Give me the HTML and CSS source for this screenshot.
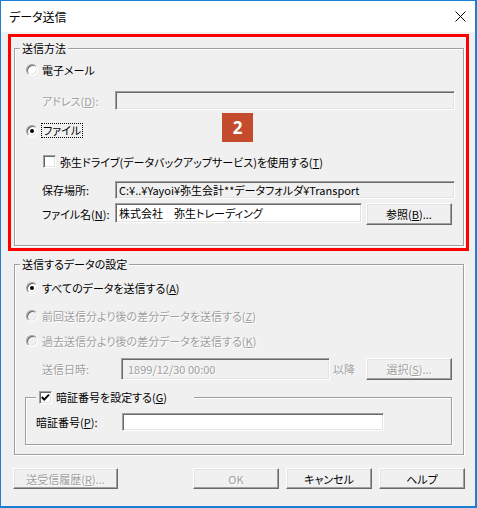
FILE: index.html
```html
<!DOCTYPE html>
<html lang="ja">
<head>
<meta charset="utf-8">
<title>データ送信</title>
<link rel="stylesheet" href="styles.css">
</head>
<body>
<div class="window">
  <div class="titlebar">
    <span class="title">データ送信</span>
    <svg class="close" width="11" height="11" viewBox="0 0 11 11"><path d="M0.5 0.5L10.5 10.5M10.5 0.5L0.5 10.5" stroke="#000" stroke-width="1" fill="none"/></svg>
  </div>
  <div class="client">
    <div class="highlight">
      <div class="group g1">
        <div class="legend">送信方法</div>
        <div class="row r-mail"><span class="radio"></span><span class="lbl">電子メール</span></div>
        <div class="row r-addr disabled"><span class="label l1">アドレス(<u>D</u>):</span><span class="field wide ro"></span></div>
        <div class="row r-file"><span class="radio on"></span><span class="lbl focus">ファイル</span></div>
        <div class="row r-drive"><span class="check"></span><span class="lbl">弥生ドライブ(データバックアップサービス)を使用する(<u>T</u>)</span></div>
        <div class="row r-path"><span class="label l1">保存場所:</span><span class="field wide ro">C:¥..¥Yayoi¥弥生会計**データフォルダ¥Transport</span></div>
        <div class="row r-name"><span class="label l1">ファイル名(<u>N</u>):</span><span class="field name">株式会社　弥生トレーディング</span><span class="button ref">参照(<u>B</u>)...</span></div>
      </div>
      <div class="badge">2</div>
    </div>

    <div class="group g2">
      <div class="legend">送信するデータの設定</div>
      <div class="row r-all"><span class="radio on"></span><span class="lbl">すべてのデータを送信する(<u>A</u>)</span></div>
      <div class="row r-prev disabled"><span class="radio dis"></span><span class="lbl">前回送信分より後の差分データを送信する(<u>Z</u>)</span></div>
      <div class="row r-past disabled"><span class="radio dis"></span><span class="lbl">過去送信分より後の差分データを送信する(<u>K</u>)</span></div>
      <div class="row r-date disabled"><span class="label l2">送信日時:</span><span class="field date ro">1899/12/30 00:00</span><span class="after">以降</span><span class="button sel">選択(<u>S</u>)...</span></div>
      <div class="group sub">
        <div class="legend pin-legend"><span class="check"><svg width="11" height="11" viewBox="0 0 11 11"><polyline points="1.8,5 4.2,7.6 9,2.6" fill="none" stroke="#000" stroke-width="1.9"/></svg></span><span class="lbl">暗証番号を設定する(<u>G</u>)</span></div>
        <div class="row r-pin"><span class="label l3">暗証番号(<u>P</u>):</span><span class="field pin"></span></div>
      </div>
    </div>

    <div class="buttons">
      <span class="button hist disabled">送受信履歴(<u>R</u>)...</span>
      <span class="button ok disabled">OK</span>
      <span class="button">キャンセル</span>
      <span class="button">ヘルプ</span>
    </div>
  </div>
</div>
</body>
</html>
```

FILE: styles.css
```css
* { box-sizing: border-box; }
html, body { margin: 0; padding: 0; }
body {
  width: 477px;
  height: 508px;
  background: #ffffff;
  font-family: "Noto Sans CJK JP", "Noto Sans", sans-serif;
  font-size: 11px;
  color: #000;
  font-feature-settings: "palt";
}
u { text-decoration: underline; text-underline-offset: 1px; }

.window {
  width: 477px;
  height: 508px;
  border-style: solid;
  border-color: #1c7fd6;
  border-width: 1px 2px 2px 1px;
  background: #f0f0f0;
  display: flex;
  flex-direction: column;
}
.titlebar {
  height: 31px;
  flex: none;
  background: #fff;
  display: flex;
  align-items: center;
  justify-content: space-between;
  padding: 0 9px 0 8px;
}
.title { font-size: 12px; line-height: 14px; }
.close { display: block; }

.client { display: flex; flex-direction: column; }

.highlight {
  position: relative;
  margin: 2px 0 0 7px;
  width: 461px;
  height: 217px;
  border: 3px solid #ff0000;
  padding: 11px 0 0 3px;
}
.badge {
  position: absolute;
  left: 211px;
  top: 76px;
  width: 31px;
  height: 29px;
  background: #c44b2b;
  color: #fff;
  font-family: "Noto Sans", sans-serif;
  font-weight: 700;
  font-size: 17px;
  line-height: 29px;
  text-align: center;
}

.group {
  border: 1px solid #a0a0a0;
  box-shadow: inset 1px 1px 0 #fff, 1px 1px 0 #fff;
  display: flex;
  flex-direction: column;
}
.g1 { width: 450px; height: 198px; }
.g2 { width: 450px; height: 191px; margin: 13px 0 0 13px; }
.sub { width: 427px; height: 48px; margin: 17px 0 0 10px; }

.legend {
  align-self: flex-start;
  margin: -8px 0 0 5px;
  padding: 0 2px;
  height: 14px;
  line-height: 14px;
  background: #f0f0f0;
  white-space: nowrap;
}
.pin-legend {
  margin-left: 10px;
  width: 158px;
  padding: 0 0 0 3px;
  display: flex;
  align-items: center;
  gap: 4px;
}

.row { display: flex; align-items: center; white-space: nowrap; line-height: 14px; }
.lbl { line-height: 14px; }

.r-mail { margin-top: 7px; height: 16px; padding-left: 11px; gap: 4px; }
.r-addr { margin-top: 13px; height: 19px; padding-left: 27px; }
.r-file { margin-top: 13px; height: 15px; padding-left: 11px; gap: 4px; }
.r-drive { margin-top: 16px; height: 15px; padding-left: 28px; gap: 4px; }
.r-path { margin-top: 12px; height: 18px; padding-left: 27px; }
.r-name { margin-top: 4px; height: 22px; padding-left: 27px; align-items: flex-start; }

.r-all { margin-top: 9px; height: 16px; padding-left: 11px; gap: 4px; }
.r-prev { margin-top: 12px; height: 16px; padding-left: 11px; gap: 4px; }
.r-past { margin-top: 9px; height: 16px; padding-left: 11px; gap: 4px; }
.r-date { margin-top: 9px; height: 22px; padding-left: 27px; }
.r-pin { margin-top: 9px; height: 18px; padding-left: 10px; }

.label { flex: none; }
.l1 { width: 73px; }
.l2 { width: 79px; }
.l3 { width: 86px; }
.r-name .label { align-self: center; }

.focus {
  margin-left: -1px;
  padding: 0 1px;
  height: 15px;
  line-height: 13px;
  border: 1px dotted #000;
}

.disabled, .disabled .lbl, .button.disabled {
  color: #a0a0a0;
  text-shadow: 1px 1px 0 #fff;
}

.radio {
  flex: none;
  position: relative;
  width: 12px;
  height: 12px;
  border-radius: 50%;
  border: 1px solid;
  border-color: #a0a0a0 #fff #fff #a0a0a0;
  box-shadow: inset 1px 1px 0 #696969, inset -1px -1px 0 #e3e3e3;
  background: #fff;
}
.radio.dis { background: #f0f0f0; }
.radio.on::after {
  content: "";
  position: absolute;
  left: 3px;
  top: 3px;
  width: 4px;
  height: 4px;
  border-radius: 50%;
  background: #000;
}

.check {
  flex: none;
  width: 13px;
  height: 13px;
  border: 1px solid;
  border-color: #a0a0a0 #fff #fff #a0a0a0;
  box-shadow: inset 1px 1px 0 #696969, inset -1px -1px 0 #e3e3e3;
  background: #fff;
  display: flex;
  align-items: center;
  justify-content: center;
}
.check svg { display: block; }

.field {
  flex: none;
  border: 1px solid;
  border-color: #a0a0a0 #fff #fff #a0a0a0;
  box-shadow: inset 1px 1px 0 #696969, inset -1px -1px 0 #e3e3e3;
  background: #fff;
  padding: 0 3px;
  display: flex;
  align-items: center;
  overflow: hidden;
  color: #000;
  text-shadow: none;
}
.field.ro { background: #f0f0f0; }
.wide { width: 340px; height: 19px; }
.r-path .wide { height: 18px; }
.name { width: 247px; height: 20px; }
.date { width: 209px; height: 22px; padding-left: 6px; color: #a0a0a0; text-shadow: 1px 1px 0 #fff; }
.pin { width: 262px; height: 18px; }
.after { flex: none; width: 33px; margin-left: 3px; }

.button {
  flex: none;
  width: 86px;
  height: 22px;
  border: 1px solid;
  border-color: #fff #696969 #696969 #fff;
  box-shadow: inset -1px -1px 0 #a0a0a0, inset 1px 1px 0 #e3e3e3;
  background: #f0f0f0;
  display: flex;
  align-items: center;
  justify-content: center;
  line-height: 14px;
  white-space: nowrap;
}
.ref { margin-left: 4px; }
.buttons {
  display: flex;
  gap: 7px;
  margin: 13px 10px 0 12px;
}
.buttons .button { height: 21px; }
.hist { width: 105px; }
.ok { margin-left: auto; }
```
